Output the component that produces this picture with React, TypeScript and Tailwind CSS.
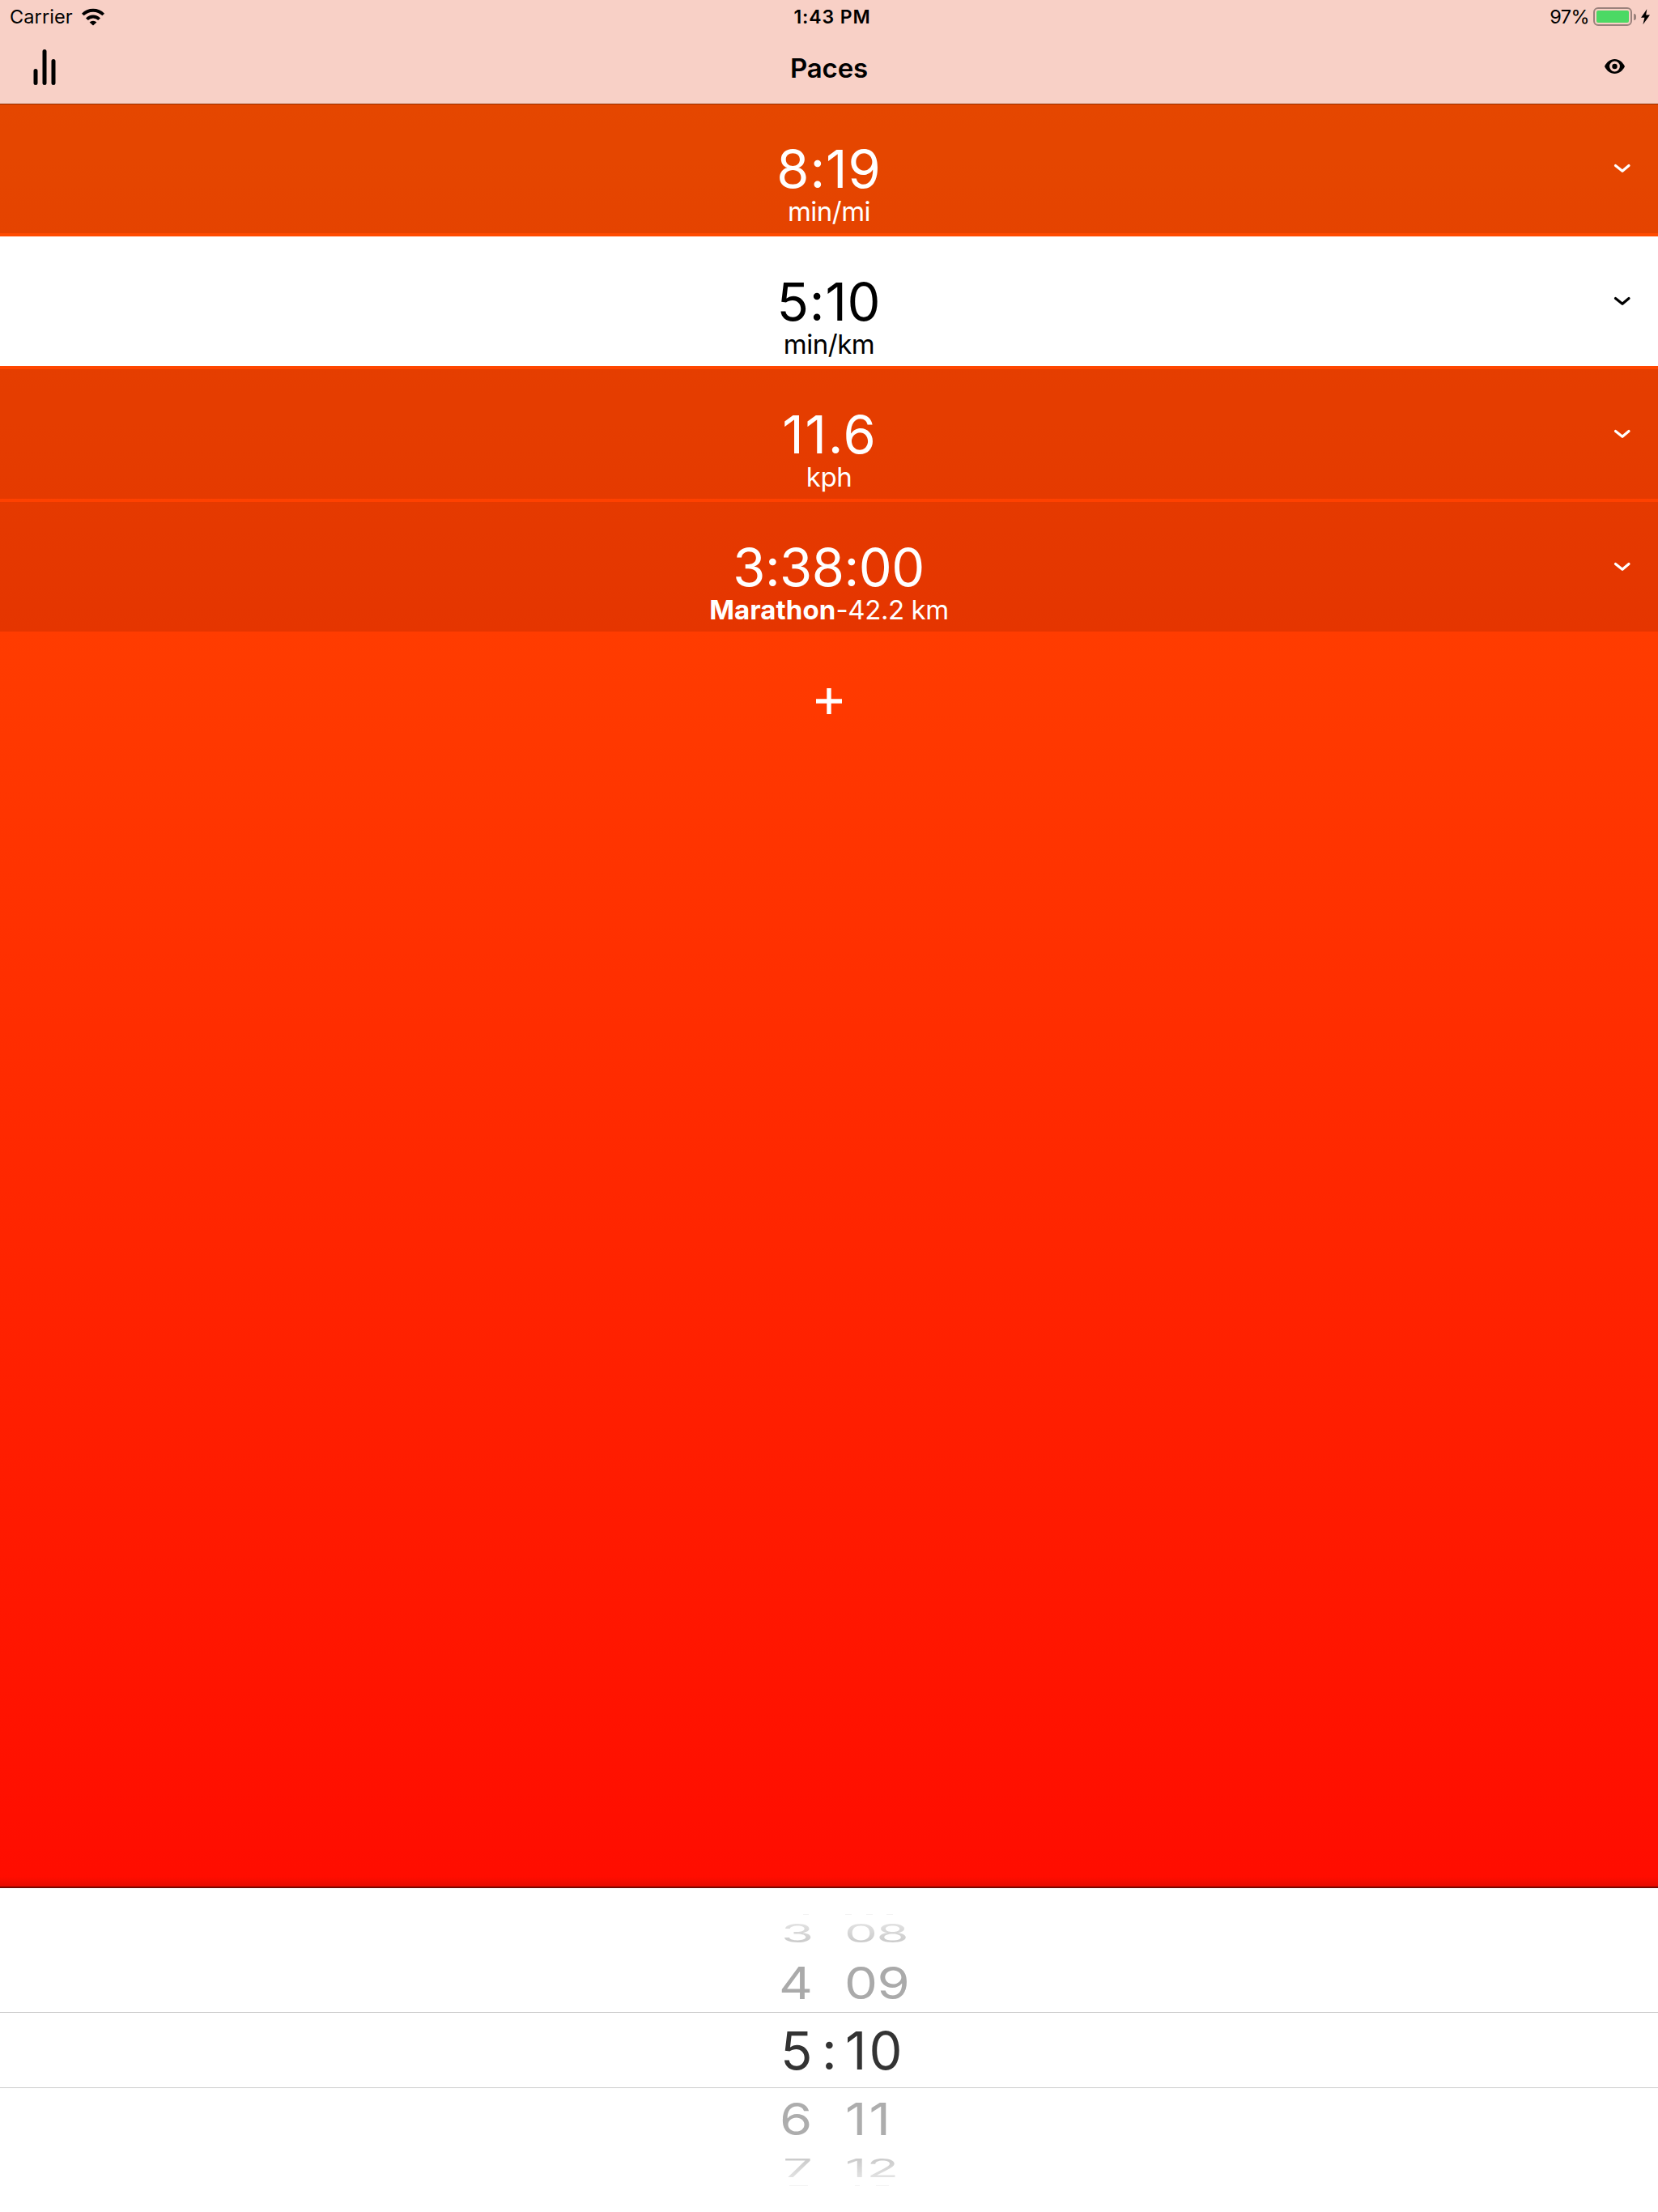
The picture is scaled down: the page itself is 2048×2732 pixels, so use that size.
import React from "react";

type Pace = {
  value: string;
  label: string;
  strong?: string;
  active?: boolean;
  valueClass: string;
  labelClass: string;
};

const paces: Pace[] = [
  { value: "8:19", label: "min/mi", valueClass: "tracking-[0.9px]", labelClass: "tracking-[-0.5px]" },
  { value: "5:10", label: "min/km", active: true, valueClass: "tracking-[0.8px]", labelClass: "tracking-[-0.5px]" },
  { value: "11.6", label: "kph", valueClass: "pl-[2px] tracking-[1.8px]", labelClass: "tracking-[-0.4px]" },
  { value: "3:38:00", label: "-42.2 km", strong: "Marathon", valueClass: "pr-[1px] tracking-[-0.5px]", labelClass: "tracking-[-0.4px]" },
];

function StatusBar() {
  return (
    <div className="grid h-[41px] grid-cols-3 items-center text-[23.5px] leading-none">
      <div className="flex items-center pl-[12px]">
        <span className="w-[88px] tracking-[0.1px]">Carrier</span>
        <svg className="h-[22px] w-[30px]" viewBox="0 0 30 22" fill="none" stroke="black" strokeWidth="3.8">
          <path d="M2.3 8A18 18 0 0 1 27.7 8" />
          <path d="M7.4 13.8A10.4 10.4 0 0 1 22.6 13.8" />
          <path d="M10.6 17.6A6.4 6.4 0 0 1 19.4 17.6L15 21.6Z" fill="black" stroke="none" />
        </svg>
      </div>
      <div className="pt-[2px] pl-[8px] text-center text-[23px] font-[560] tracking-[0.9px]">1:43 PM</div>
      <div className="flex items-center justify-end pr-[9px]">
        <span className="mr-[5px] tracking-[-0.6px]">97%</span>
        <div className="h-[23px] w-[48px] rounded-[6px] border-2 border-[#9b827c] p-[2px]">
          <div className="h-full w-full rounded-[2px] bg-[#4cd964]" />
        </div>
        <div className="ml-[2px] h-[8px] w-[3px] rounded-r-full bg-[#9b827c]" />
        <svg className="ml-[5px] h-[20px] w-[13px]" viewBox="0 0 13 20">
          <path d="M8.3 0.3L1 10.8H5.4L3.4 19.2L12 7.6H7.2Z" fill="black" />
        </svg>
      </div>
    </div>
  );
}

function NavBar() {
  return (
    <div className="grid h-[87px] grid-cols-3 items-center">
      <svg className="ml-[40px] h-[87px] w-[30px]" viewBox="0 0 30 87" stroke="black" strokeWidth="5" strokeLinecap="round">
        <path d="M4 46.5V61.5M15 22.5V61.5M26 34.5V61.5" />
      </svg>
      <div className="text-center text-[33px] leading-none font-[570] tracking-[-0.2px]">Paces</div>
      <svg className="mr-[41px] -mt-[5px] h-[18px] w-[25px] justify-self-end" viewBox="0 0 25 18">
        <path fillRule="evenodd" d="M12.5 0C18 0 22.5 3.8 25 9C22.5 14.2 18 18 12.5 18S2.5 14.2 0 9C2.5 3.8 7 0 12.5 0ZM12.5 2.6A6.4 6.4 0 1 0 12.5 15.4A6.4 6.4 0 1 0 12.5 2.6Z" />
        <circle cx="12.5" cy="9" r="3.2" />
      </svg>
    </div>
  );
}

function PaceRow({ pace }: { pace: Pace }) {
  return (
    <div className={`grid h-[160px] grid-cols-[70px_1fr_70px] ${pace.active ? "bg-white text-black" : "bg-black/10 text-white"}`}>
      <div />
      <div className="flex flex-col items-center pt-[53px]">
        <div className={`h-[55px] text-[65px] leading-[55px] ${pace.valueClass}`}>{pace.value}</div>
        <div className={`h-[50px] text-[33px] leading-[50px] ${pace.labelClass}`}>
          {pace.strong && <span className="font-bold tracking-[0.1px]">{pace.strong}</span>}
          {pace.label}
        </div>
      </div>
      <svg className="mt-[74px] ml-[15px] h-[12px] w-[22px]" viewBox="0 0 22 12" fill="none" stroke="currentColor" strokeWidth="3.2" strokeLinecap="round" strokeLinejoin="round">
        <path d="M2.5 2.5L11 9.3L19 2.5" />
      </svg>
    </div>
  );
}

function Picker() {
  return (
    <div className="flex h-[400px] flex-col bg-white pt-[32px] text-[65px] leading-none">
      <div className="flex h-px pl-[992px]">
        <i className="w-[7px] bg-[#f2f2f2]" />
        <i className="ml-[45px] w-[8px] bg-[#f2f2f2]" />
        <i className="ml-[18px] w-[8px] bg-[#f2f2f2]" />
        <i className="ml-[17px] w-[8px] bg-[#f2f2f2]" />
      </div>
      <div className="flex h-[45px] items-center pl-[965px]">
        <div className="flex scale-y-[0.49] bg-linear-to-b from-[#e6e6e6] to-[#c6c6c6] bg-clip-text text-transparent">
          <span className="w-[78px]">3</span>
          <span className="tracking-[-1.5px]">08</span>
        </div>
      </div>
      <div className="flex h-[75px] items-center pt-[3px] pl-[962px] text-[#aaaaaa]">
        <div className="flex scale-y-[0.84]">
          <span className="w-[81px]">4</span>
          <span className="tracking-[-0.5px]">09</span>
        </div>
      </div>
      <div className="flex h-[94px] items-center border-y border-[#cccccc] pl-[964px] text-[#333333]">
        <span className="w-[51px]">5</span>
        <span className="w-[29px]">:</span>
        <span className="tracking-[3px]">10</span>
      </div>
      <div className="flex h-[76px] items-center pl-[963px] text-[#adadad]">
        <div className="flex scale-y-[0.84]">
          <span className="w-[81px]">6</span>
          <span className="tracking-[3px]">11</span>
        </div>
      </div>
      <div className="flex h-[44px] items-center pl-[967px]">
        <div className="flex scale-y-[0.47] bg-linear-to-b from-[#c6c6c6] to-[#e6e6e6] bg-clip-text text-transparent">
          <span className="w-[77px]">7</span>
          <span>12</span>
        </div>
      </div>
      <div className="flex h-px pl-[975px]">
        <i className="w-[23px] bg-[#f2f2f2]" />
        <i className="ml-[58px] w-[6px] bg-[#f2f2f2]" />
        <i className="ml-[20px] w-[16px] bg-[#f2f2f2]" />
      </div>
    </div>
  );
}

export default function App() {
  return (
    <div className="flex h-[2732px] w-[2048px] flex-col overflow-hidden bg-linear-to-b/srgb from-[#ff5400] to-[#ff0000] font-['Inter',sans-serif] text-black">
      <header className="h-[128px] bg-[#f8d0c6]">
        <StatusBar />
        <NavBar />
      </header>
      <main className="flex flex-1 flex-col">
        <div className="-mb-px h-px bg-[#a23300]" />
        <div className="flex flex-col gap-[4px]">
          {paces.map((p) => (
            <PaceRow key={p.value} pace={p} />
          ))}
        </div>
        <svg className="mx-auto mt-[69px] h-[34px] w-[34px]" viewBox="0 0 34 34" stroke="white" strokeWidth="5.4">
          <path d="M1 17H33M17 1V33" />
        </svg>
        <div className="mt-auto h-[12px] bg-linear-to-b from-black/0 to-black/10" />
        <div className="h-[2px] bg-[#7a0600]" />
      </main>
      <Picker />
    </div>
  );
}
